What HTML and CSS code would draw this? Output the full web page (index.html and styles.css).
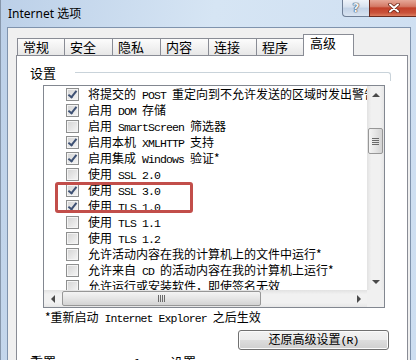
FILE: index.html
```html
<!DOCTYPE html>
<html lang="zh-CN">
<head>
  <meta charset="UTF-8">
  <title>Internet 选项</title>
  <link rel="stylesheet" href="styles.css">
</head>
<body>
  <div class="window">
    <div class="titlebar">
      <span class="title">Internet 选项</span>
      <div class="caption">
        <span class="help">?</span>
        <span class="close">
          <svg width="12" height="10" viewBox="0 0 12 10">
            <path d="M2 1.5L10 8.5M10 1.5L2 8.5" stroke="#6a2416" stroke-width="3.6" stroke-linecap="round"/>
            <path d="M2 1.5L10 8.5M10 1.5L2 8.5" stroke="#fff" stroke-width="2" stroke-linecap="round"/>
          </svg>
        </span>
      </div>
    </div>

    <div class="client">
      <ul class="tabs">
        <li class="first">常规</li>
        <li>安全</li>
        <li>隐私</li>
        <li>内容</li>
        <li>连接</li>
        <li class="last">程序</li>
        <li class="active">高级</li>
      </ul>

      <div class="panel">
        <div class="group">
          <span>设置</span>
          <i></i>
        </div>

        <div class="listbox">
          <div class="list-main">
            <ul class="items">
              <li><i class="cb on"></i>将提交的<code> POST </code>重定向到不允许发送的区域时发出警告</li>
              <li><i class="cb on"></i>启用<code> DOM </code>存储</li>
              <li><i class="cb"></i>启用<code> SmartScreen </code>筛选器</li>
              <li><i class="cb on"></i>启用本机<code> XMLHTTP </code>支持</li>
              <li><i class="cb on"></i>启用集成<code> Windows </code>验证*</li>
              <li><i class="cb"></i>使用<code> SSL 2.0</code></li>
              <li><i class="cb on"></i>使用<code> SSL 3.0</code></li>
              <li><i class="cb on"></i>使用<code> TLS 1.0</code></li>
              <li><i class="cb"></i>使用<code> TLS 1.1</code></li>
              <li><i class="cb"></i>使用<code> TLS 1.2</code></li>
              <li><i class="cb"></i>允许活动内容在我的计算机上的文件中运行*</li>
              <li><i class="cb"></i>允许来自<code> CD </code>的活动内容在我的计算机上运行*</li>
              <li><i class="cb"></i>允许运行或安装软件，即使签名无效</li>
            </ul>
            <div class="vscroll">
              <span class="sb-btn"><i class="tri up"></i></span>
              <span class="thumb-v"><i class="grip"></i></span>
              <span class="sb-btn end"><i class="tri down"></i></span>
            </div>
          </div>
          <div class="hbar">
            <div class="hscroll">
              <span class="sb-btn"><i class="tri left"></i></span>
              <span class="thumb-h"><i class="grip"></i></span>
              <span class="sb-btn end"><i class="tri right"></i></span>
            </div>
            <div class="corner"></div>
          </div>
          <div class="mark"></div>
        </div>

        <p class="note">*重新启动<code> Internet Explorer </code>之后生效</p>

        <div class="actions">
          <button type="button">还原高级设置<code>(R)</code></button>
        </div>

        <div class="group reset">
          <span>重置<code> Internet Explorer </code>设置</span>
          <i></i>
        </div>
      </div>
    </div>
  </div>
</body>
</html>
```

FILE: styles.css
```css
* { box-sizing: border-box; }
body { margin: 0; width: 416px; height: 360px; overflow: hidden; font-family: "Noto Sans CJK SC", sans-serif; font-size: 12px; color: #000; }
ul { list-style: none; margin: 0; padding: 0; }
code { font-family: "Liberation Mono", monospace; font-size: 11.5px; letter-spacing: -0.9px; }

/* window frame */
.window { height: 360px; display: flex; flex-direction: column; padding: 0 5px 0 6px; border-left: 1px solid #8797ab; background: linear-gradient(100deg, #bcd0e8 0%, #d6e5f4 45%, #cddef1 100%); }
.titlebar { height: 27px; display: flex; align-items: flex-start; flex: none; }
.title { font-family: "Noto Sans", "Noto Sans CJK SC", sans-serif; font-size: 12px; line-height: 16px; margin: 6px 0 0 1px; }
.caption { margin-left: auto; margin-right: -5px; display: flex; }
.help { width: 27px; height: 17px; border: 1px solid #6f7f96; border-top: 0; border-right: 0; border-radius: 0 0 0 4px; background: linear-gradient(#eef3f9, #d6e1ee 45%, #c2d2e6 50%, #d9e4f1); color: #eef1f5; font: bold 12px/16px "DejaVu Sans", sans-serif; text-align: center; text-shadow: 0 0 1px #33445a, 0 0 1px #33445a, 0 0 1px #33445a; }
.close { width: 47px; height: 17px; border: 1px solid #6a2a1e; border-top: 0; border-right: 0; background: linear-gradient(#e6a898, #d47a66 40%, #c2412a 50%, #c9513a 80%, #dc7d5f); display: flex; align-items: center; justify-content: center; padding-left: 2px; }

.client { flex: 1; display: flex; flex-direction: column; background: #f0f0f0; border: 1px solid #7f93ad; border-bottom: 0; padding: 6px 2px 0 8px; }

/* tabs */
.tabs { display: flex; align-items: flex-end; height: 21px; padding-left: 1px; flex: none; }
.tabs li { width: 48px; height: 17px; border: 1px solid #898c95; border-bottom: 0; border-right: 0; background: linear-gradient(#fcfcfc, #e7e7e7); font-size: 13px; line-height: 15px; padding-left: 5px; }
.tabs li.first, .tabs li.last { width: 47px; }
.tabs li.active { width: 51px; height: 22px; margin-bottom: -1px; border-right: 1px solid #898c95; background: #fff; padding: 0 0 0 6px; position: relative; z-index: 1; }

.panel { flex: 1; border: 1px solid #898c95; background: #fff; }

.group { display: flex; align-items: flex-start; margin: 9px 16px 0 13px; font-size: 13px; line-height: 16px; }
.group i { flex: 1; height: 9px; margin: 7px 0 0 19px; border-top: 1px solid #c9d3da; border-right: 1px solid #c9d3da; border-top-right-radius: 3px; }
.group.reset { margin-top: 4px; }
.group.reset i { margin-left: 29px; }

/* list box */
.listbox { position: relative; width: 342px; height: 223px; margin: 4px 0 0 26px; border: 1px solid #828790; display: flex; flex-direction: column; }
.list-main { display: flex; height: 204px; }
.items { flex: 1; overflow: hidden; }
.items li { height: 16px; white-space: nowrap; padding-left: 22px; line-height: 16px; }
.cb { display: inline-block; position: relative; width: 13px; height: 13px; margin-right: 9px; vertical-align: -2px; border: 1px solid #8e8f8f; box-shadow: inset 0 0 0 1px #f4f4f4; background: linear-gradient(135deg, #d3d3d3, #f6f6f6); }
.cb.on::after { content: ""; position: absolute; left: 3px; top: 0; width: 3px; height: 7px; border: solid #3e5174; border-width: 0 2px 2px 0; transform: rotate(38deg); }

.vscroll { width: 17px; display: flex; flex-direction: column; background: linear-gradient(to right, #e2e2e2, #f1f1f1 25%, #f1f1f1 75%, #e6e6e6); }
.hscroll { flex: 1; display: flex; align-items: center; background: linear-gradient(#e2e2e2, #f1f1f1 25%, #f1f1f1 75%, #e6e6e6); }
.sb-btn { flex: none; width: 17px; height: 17px; display: flex; align-items: center; justify-content: center; }
.sb-btn.end { margin-top: auto; margin-left: auto; }
.tri { width: 0; height: 0; border: 4px solid transparent; }
.tri.up { border-top: 0; border-bottom: 4px solid #4a4a4a; }
.tri.down { border-bottom: 0; border-top: 4px solid #4a4a4a; }
.tri.left { border-left: 0; border-right: 4px solid #4a4a4a; }
.tri.right { border-right: 0; border-left: 4px solid #4a4a4a; }
.thumb-v { margin: 25px 1px 0; height: 26px; border: 1px solid #979797; border-radius: 2px; background: linear-gradient(to right, #f4f4f4, #e5e5e5 50%, #d3d3d3); display: flex; align-items: center; justify-content: center; }
.thumb-v .grip { width: 7px; height: 7px; background: repeating-linear-gradient(#6a6a6a 0 1px, transparent 1px 2px); }
.thumb-h { width: 199px; height: 15px; margin-left: 1px; border: 1px solid #979797; border-radius: 2px; background: linear-gradient(#f4f4f4, #e5e5e5 50%, #d3d3d3); display: flex; align-items: center; justify-content: center; }
.thumb-h .grip { width: 7px; height: 7px; background: repeating-linear-gradient(to right, #6a6a6a 0 1px, transparent 1px 2px); }
.hbar { display: flex; height: 17px; }
.corner { width: 17px; background: #f0f0f0; }

.mark { position: absolute; left: 11px; top: 96px; width: 138px; height: 31px; border: 3px solid #c24e4a; border-radius: 3px; }

.note { margin: 1px 0 0 28px; line-height: 16px; }
.actions { display: flex; justify-content: flex-end; margin: 3px 18px 0 0; }
.actions button { width: 151px; height: 20px; padding: 0; font-family: "Noto Sans CJK SC", sans-serif; font-size: 12px; line-height: 16px; color: #000; border: 1px solid #707070; border-radius: 3px; box-shadow: inset 0 0 0 1px #fbfbfb; background: linear-gradient(#f2f2f2, #ebebeb 50%, #dddddd 50%, #cfcfcf); }
```
